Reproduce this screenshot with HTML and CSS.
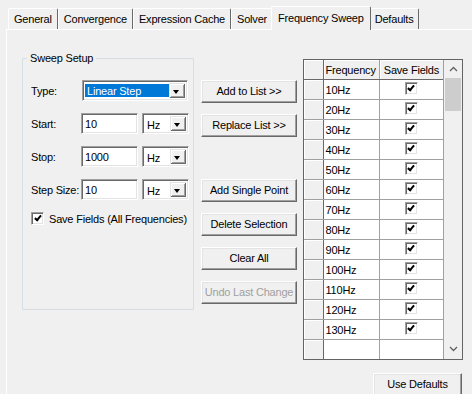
FILE: index.html
```html
<!DOCTYPE html>
<html lang="en">
<head>
    <meta charset="UTF-8">
    <title>Frequency Sweep</title>
    <link rel="stylesheet" href="styles.css">
</head>
<body>
    <div class="dialog">
        <div class="tabs">
            <span class="tab">General</span>
            <span class="tab">Convergence</span>
            <span class="tab">Expression Cache</span>
            <span class="tab">Solver</span>
            <span class="tab active">Frequency Sweep</span>
            <span class="tab">Defaults</span>
        </div>
        <div class="pane">
            <fieldset class="group">
                <legend>Sweep Setup</legend>
                <div class="rows">
                    <div class="row">
                        <span class="lbl">Type:</span>
                        <div class="field combo type"><span class="sel">Linear Step</span><span class="drop"></span></div>
                    </div>
                    <div class="row">
                        <span class="lbl">Start:</span>
                        <div class="field num">10</div>
                        <div class="field combo unit"><span class="val">Hz</span><span class="drop"></span></div>
                    </div>
                    <div class="row">
                        <span class="lbl">Stop:</span>
                        <div class="field num">1000</div>
                        <div class="field combo unit"><span class="val">Hz</span><span class="drop"></span></div>
                    </div>
                    <div class="row">
                        <span class="lbl">Step Size:</span>
                        <div class="field num">10</div>
                        <div class="field combo unit"><span class="val">Hz</span><span class="drop"></span></div>
                    </div>
                    <div class="check-row">
                        <span class="cb"></span>
                        <span>Save Fields (All Frequencies)</span>
                    </div>
                </div>
            </fieldset>

            <div class="actions">
                <span class="btn">Add to List &gt;&gt;</span>
                <span class="btn">Replace List &gt;&gt;</span>
                <span class="btn spaced">Add Single Point</span>
                <span class="btn">Delete Selection</span>
                <span class="btn">Clear All</span>
                <span class="btn disabled">Undo Last Change</span>
            </div>

            <div class="right">
                <div class="grid">
                    <table>
                        <colgroup><col class="c-rh"><col class="c-freq"><col class="c-save"></colgroup>
                        <tr class="head"><th class="rh"></th><th class="freq">Frequency</th><th>Save Fields</th></tr>
                        <tr><th class="rh"></th><td class="freq">10Hz</td><td class="mid"><span class="cb"></span></td></tr>
                        <tr><th class="rh"></th><td class="freq">20Hz</td><td class="mid"><span class="cb"></span></td></tr>
                        <tr><th class="rh"></th><td class="freq">30Hz</td><td class="mid"><span class="cb"></span></td></tr>
                        <tr><th class="rh"></th><td class="freq">40Hz</td><td class="mid"><span class="cb"></span></td></tr>
                        <tr><th class="rh"></th><td class="freq">50Hz</td><td class="mid"><span class="cb"></span></td></tr>
                        <tr><th class="rh"></th><td class="freq">60Hz</td><td class="mid"><span class="cb"></span></td></tr>
                        <tr><th class="rh"></th><td class="freq">70Hz</td><td class="mid"><span class="cb"></span></td></tr>
                        <tr><th class="rh"></th><td class="freq">80Hz</td><td class="mid"><span class="cb"></span></td></tr>
                        <tr><th class="rh"></th><td class="freq">90Hz</td><td class="mid"><span class="cb"></span></td></tr>
                        <tr><th class="rh"></th><td class="freq">100Hz</td><td class="mid"><span class="cb"></span></td></tr>
                        <tr><th class="rh"></th><td class="freq">110Hz</td><td class="mid"><span class="cb"></span></td></tr>
                        <tr><th class="rh"></th><td class="freq">120Hz</td><td class="mid"><span class="cb"></span></td></tr>
                        <tr><th class="rh"></th><td class="freq">130Hz</td><td class="mid"><span class="cb"></span></td></tr>
                        <tr><th class="rh"></th><td class="freq"></td><td class="mid"></td></tr>
                    </table>
                    <div class="scrollbar">
                        <span class="arrow"><svg width="9" height="6" viewBox="0 0 9 6"><polyline points="1,5 4.5,1.5 8,5" fill="none" stroke="#606060" stroke-width="1.3"/></svg></span>
                        <span class="thumb"></span>
                        <span class="arrow bottom"><svg width="9" height="6" viewBox="0 0 9 6"><polyline points="1,1 4.5,4.5 8,1" fill="none" stroke="#606060" stroke-width="1.3"/></svg></span>
                    </div>
                </div>
                <span class="btn defaults">Use Defaults</span>
            </div>
        </div>
    </div>
</body>
</html>
```

FILE: styles.css
```css
body {
    margin: 0;
    background: #f0f0f0;
    font-family: "Liberation Sans", Arial, sans-serif;
    font-size: 11px;
    letter-spacing: -0.2px;
    color: #000;
    overflow: hidden;
}
.dialog {
    width: 466px;
    height: 388px;
    padding: 6px 0 0 6px;
    overflow: hidden;
}

/* tab strip */
.tabs {
    display: flex;
    align-items: flex-end;
    height: 23px;
    padding-left: 2px;
}
.tab {
    height: 20px;
    line-height: 21px;
    padding: 0 5px;
    border-top: 1px solid #fff;
    border-left: 1px solid #fff;
    border-right: 1px solid #696969;
    border-radius: 2px 2px 0 0;
    white-space: nowrap;
}
.tab.active {
    position: relative;
    z-index: 1;
    height: 23px;
    line-height: 22px;
    margin: 0 -2px -1px -2px;
    padding: 0 6px;
    background: #f0f0f0;
}

.pane {
    box-sizing: border-box;
    display: flex;
    align-items: flex-start;
    width: 466px;
    height: 365px;
    padding: 21px 0 0 15px;
    border-top: 1px solid #fff;
    border-left: 1px solid #fff;
    overflow: hidden;
}

/* group box */
.group {
    box-sizing: border-box;
    flex: none;
    width: 172px;
    height: 259px;
    margin: 0;
    padding: 0 0 0 8px;
    border: 1px solid #d5dfe5;
}
.group legend {
    margin-left: -4px;
    padding: 0 3px;
    line-height: 14px;
}
.rows {
    margin-top: 15px;
}
.row {
    display: flex;
    align-items: center;
    height: 21px;
    margin-bottom: 12px;
}
.lbl {
    width: 50px;
}

/* sunken edit / combo */
.field {
    box-sizing: border-box;
    height: 21px;
    background: #fff;
    border: 1px solid;
    border-color: #a0a0a0 #fff #fff #a0a0a0;
    box-shadow: inset 1px 1px 0 #696969, inset -1px -1px 0 #e3e3e3;
}
.num {
    width: 57px;
    padding: 1px 0 0 3px;
    line-height: 18px;
}
.combo {
    display: flex;
    padding: 2px;
}
.combo.type {
    width: 106px;
    margin-left: 1px;
}
.combo.unit {
    width: 47px;
    margin-left: 4px;
}
.sel {
    flex: 1;
    margin: 1px 0;
    padding-left: 2px;
    background: #0078d7;
    color: #fff;
    line-height: 15px;
}
.val {
    flex: 1;
    padding-left: 2px;
    line-height: 18px;
}
.drop {
    position: relative;
    width: 16px;
    background: #f0f0f0;
    box-shadow: inset 1px 1px 0 #e3e3e3, inset -1px -1px 0 #696969, inset 2px 2px 0 #fff, inset -2px -2px 0 #a0a0a0;
}
.drop::after {
    content: "";
    position: absolute;
    left: 4px;
    top: 7px;
    border-left: 3.5px solid transparent;
    border-right: 3.5px solid transparent;
    border-top: 4px solid #000;
}

/* checkbox */
.check-row {
    display: flex;
    align-items: center;
    margin-top: 3px;
}
.check-row span + span {
    margin-left: 5px;
}
.cb {
    position: relative;
    display: inline-block;
    box-sizing: border-box;
    width: 13px;
    height: 13px;
    background: #fff;
    border: 1px solid;
    border-color: #a0a0a0 #fff #fff #a0a0a0;
    box-shadow: inset 1px 1px 0 #696969, inset -1px -1px 0 #e3e3e3;
    vertical-align: middle;
}
.cb::after {
    content: "";
    position: absolute;
    left: 3.5px;
    top: 1px;
    width: 2px;
    height: 5px;
    border: solid #000;
    border-width: 0 2px 2px 0;
    transform: rotate(40deg);
}

/* buttons */
.actions {
    display: flex;
    flex: none;
    flex-direction: column;
    width: 96px;
    margin: 29px 0 0 7px;
}
.btn {
    box-sizing: border-box;
    display: block;
    height: 23px;
    line-height: 21px;
    margin-bottom: 11px;
    text-align: center;
    background: #f0f0f0;
    border: 1px solid;
    border-color: #fff #696969 #696969 #fff;
    box-shadow: inset -1px -1px 0 #a0a0a0, inset 1px 1px 0 #e3e3e3;
    white-space: nowrap;
}
.btn.spaced {
    margin-top: 31px;
}
.btn.disabled {
    color: #a0a0a0;
}

/* frequency list */
.right {
    display: flex;
    flex: none;
    flex-direction: column;
    margin: 8px 0 0 6px;
}
.grid {
    box-sizing: border-box;
    display: flex;
    width: 160px;
    height: 301px;
    border: 1px solid #646464;
    overflow: hidden;
}
.grid table {
    width: 141px;
    table-layout: fixed;
    border-collapse: collapse;
    border-style: hidden;
}
.c-rh { width: 19px; }
.c-freq { width: 56px; }
.c-save { width: 64px; }
.grid th,
.grid td {
    height: 19px;
    padding: 0;
    border: 1px solid #a0a0a0;
    font-weight: normal;
    white-space: nowrap;
    overflow: hidden;
}
.grid td {
    background: #fff;
}
.grid th {
    background: #f0f0f0;
    box-shadow: inset 1px 1px 0 #fff;
}
.grid .rh {
    border-right-color: #696969;
}
.grid .head th {
    border-bottom-color: #696969;
}
.grid .freq {
    padding-left: 2px;
    text-align: left;
}
.mid {
    text-align: center;
}
.mid .cb {
    top: -1px;
}
.scrollbar {
    display: flex;
    flex-direction: column;
    width: 18px;
    border-left: 1px solid #a0a0a0;
    background: #f0f0f0;
}
.arrow {
    display: flex;
    align-items: center;
    justify-content: center;
    height: 18px;
}
.arrow.bottom {
    margin-top: auto;
    margin-bottom: 1px;
}
.thumb {
    height: 33px;
    margin: 0 1px;
    background: #cdcdcd;
}
.btn.defaults {
    align-self: flex-end;
    width: 89px;
    margin: 13px 1px 0 0;
}
```
